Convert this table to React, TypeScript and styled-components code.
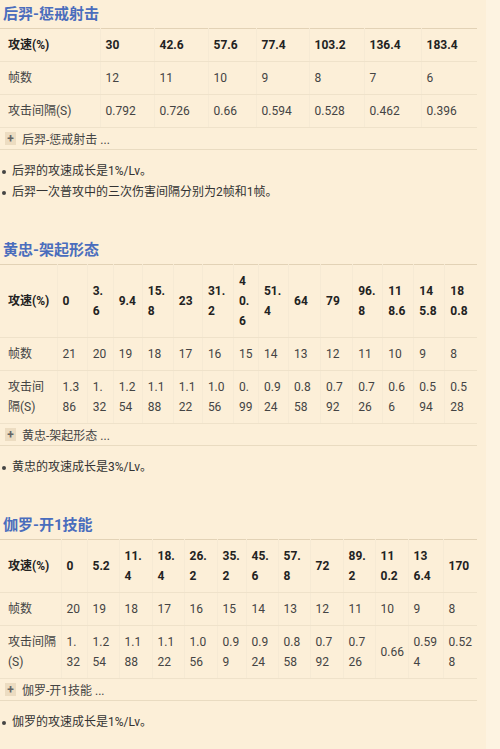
import * as React from "react";
import styled, { createGlobalStyle } from "styled-components";

const GlobalStyle = createGlobalStyle`
  html, body {
    margin: 0;
    padding: 0;
    background: #fdf3e1;
  }
  body {
    font-family: Roboto, "Noto Sans CJK SC", sans-serif;
    color: #333;
  }
`;

const Page = styled.div`
  width: 486px;
  min-height: 749px;
  background: #fcefd8;
  padding-top: 3px;
  box-sizing: border-box;
`;

const Section = styled.section`
  display: flex;
  flex-direction: column;
`;

const Title = styled.h2`
  margin: 0 0 3px 0;
  padding-left: 3px;
  font-size: 15px;
  line-height: 22px;
  font-weight: 700;
  color: #4a6dbd;
  font-family: Roboto, "Noto Sans CJK SC", sans-serif;
`;

const Table = styled.table`
  width: 477px;
  table-layout: fixed;
  border-collapse: collapse;
  font-size: 12px;
  line-height: 20px;
  border-top: 1px solid #e2d2b6;
  border-bottom: 1px solid #e6d7bd;
`;

const Cell = styled.td<{ $head?: boolean }>`
  padding: 6px 3px 6px 5px;
  vertical-align: middle;
  white-space: nowrap;
  border-bottom: 1px solid #efe2ca;
  border-left: 1px solid #f6ead4;
  font-weight: ${(p) => (p.$head ? 700 : 400)};
  color: ${(p) => (p.$head ? "#222" : "#444")};

  &:first-child {
    padding-left: 8px;
    border-left: none;
  }
`;

const Line = styled.span`
  display: block;
`;

const ExpandBar = styled.div`
  width: 477px;
  height: 22px;
  display: flex;
  align-items: center;
  gap: 6px;
  padding-left: 5px;
  box-sizing: border-box;
  border-bottom: 1px solid #e9dbc1;
  font-size: 12px;
  color: #444;
`;

const PlusBox = styled.span`
  width: 11px;
  height: 13px;
  display: flex;
  align-items: center;
  justify-content: center;
  background: #ecdcc1;
  color: #666;
  font-size: 12px;
  font-weight: 700;
  line-height: 1;
`;

const Notes = styled.ul`
  margin: 11px 0 36px 0;
  padding: 0;
  list-style: none;
`;

const Note = styled.li`
  position: relative;
  padding-left: 12px;
  font-size: 12px;
  line-height: 21px;
  color: #333;

  &::before {
    content: "";
    position: absolute;
    left: 2px;
    top: 9px;
    width: 4px;
    height: 4px;
    border-radius: 50%;
    background: #444;
  }
`;

type Cellv = string | string[];

type SectionData = {
  title: string;
  widths: number[];
  rows: Cellv[][];
  notes: string[];
};

const sections: SectionData[] = [
  {
    title: "后羿-惩戒射击",
    widths: [100, 54, 54, 48, 53, 55, 57, 56],
    rows: [
      ["攻速(%)", "30", "42.6", "57.6", "77.4", "103.2", "136.4", "183.4"],
      ["帧数", "12", "11", "10", "9", "8", "7", "6"],
      ["攻击间隔(S)", "0.792", "0.726", "0.66", "0.594", "0.528", "0.462", "0.396"],
    ],
    notes: ["后羿的攻速成长是1%/Lv。", "后羿一次普攻中的三次伤害间隔分别为2帧和1帧。"],
  },
  {
    title: "黄忠-架起形态",
    widths: [57, 30, 26, 29, 31, 29, 31, 25, 30, 32, 32, 30, 31, 31, 32],
    rows: [
      [
        "攻速(%)", "0", ["3.", "6"], "9.4", ["15.", "8"], "23", ["31.", "2"], ["4", "0.", "6"],
        ["51.", "4"], "64", "79", ["96.", "8"], ["11", "8.6"], ["14", "5.8"], ["18", "0.8"],
      ],
      ["帧数", "21", "20", "19", "18", "17", "16", "15", "14", "13", "12", "11", "10", "9", "8"],
      [
        ["攻击间", "隔(S)"], ["1.3", "86"], ["1.", "32"], ["1.2", "54"], ["1.1", "88"], ["1.1", "22"],
        ["1.0", "56"], ["0.", "99"], ["0.9", "24"], ["0.8", "58"], ["0.7", "92"], ["0.7", "26"],
        ["0.6", "6"], ["0.5", "94"], ["0.5", "28"],
      ],
    ],
    notes: ["黄忠的攻速成长是3%/Lv。"],
  },
  {
    title: "伽罗-开1技能",
    widths: [61, 26, 32, 33, 32, 33, 29, 32, 32, 33, 32, 33, 35, 34],
    rows: [
      [
        "攻速(%)", "0", "5.2", ["11.", "4"], ["18.", "4"], ["26.", "2"], ["35.", "2"], ["45.", "6"],
        ["57.", "8"], "72", ["89.", "2"], ["11", "0.2"], ["13", "6.4"], "170",
      ],
      ["帧数", "20", "19", "18", "17", "16", "15", "14", "13", "12", "11", "10", "9", "8"],
      [
        ["攻击间隔", "(S)"], ["1.", "32"], ["1.2", "54"], ["1.1", "88"], ["1.1", "22"], ["1.0", "56"],
        ["0.9", "9"], ["0.9", "24"], ["0.8", "58"], ["0.7", "92"], ["0.7", "26"], "0.66",
        ["0.59", "4"], ["0.52", "8"],
      ],
    ],
    notes: ["伽罗的攻速成长是1%/Lv。"],
  },
];

const renderCell = (v: Cellv) =>
  Array.isArray(v) ? v.map((l, i) => <Line key={i}>{l}</Line>) : v;

export default function App() {
  return (
    <>
      <GlobalStyle />
      <Page>
        {sections.map((s) => (
          <Section key={s.title}>
            <Title>{s.title}</Title>
            <Table>
              <colgroup>
                {s.widths.map((w, i) => (
                  <col key={i} style={{ width: w }} />
                ))}
              </colgroup>
              <tbody>
                {s.rows.map((row, ri) => (
                  <tr key={ri}>
                    {row.map((c, ci) => (
                      <Cell key={ci} $head={ri === 0}>
                        {renderCell(c)}
                      </Cell>
                    ))}
                  </tr>
                ))}
              </tbody>
            </Table>
            <ExpandBar>
              <PlusBox>+</PlusBox>
              {s.title} ...
            </ExpandBar>
            <Notes>
              {s.notes.map((n) => (
                <Note key={n}>{n}</Note>
              ))}
            </Notes>
          </Section>
        ))}
      </Page>
    </>
  );
}
